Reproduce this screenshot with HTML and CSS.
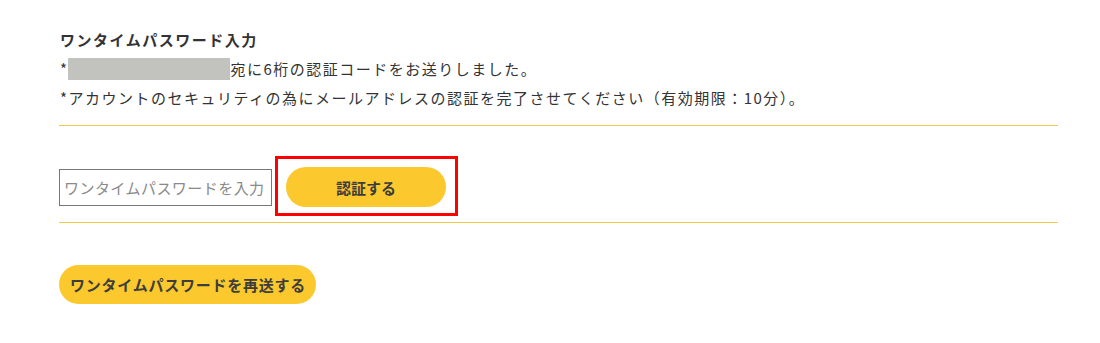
FILE: index.html
```html
<!doctype html>
<html lang="ja">
<head>
    <meta charset="UTF-8">
    <title>ワンタイムパスワード入力</title>
    <link rel="stylesheet" href="styles.css">
</head>
    <body>
        <section class="otpSection">
            <div class="otpInfo">
                <h2 class="otpTitle">ワンタイムパスワード入力</h2>
                <p class="otpText">*<span class="otpMask"></span>宛に6桁の認証コードをお送りしました。</p>
                <p class="otpText">*アカウントのセキュリティの為にメールアドレスの認証を完了させてください（有効期限：10分）。</p>
            </div>
            <div class="otpForm">
                <input class="otpInput" type="text" placeholder="ワンタイムパスワードを入力">
                <div class="otpHighlight">
                    <button class="otpButton otpSubmit">認証する</button>
                </div>
            </div>
            <div class="otpResend">
                <button class="otpButton otpResendBtn">ワンタイムパスワードを再送する</button>
            </div>
        </section>
    </body>
</html>
```

FILE: styles.css
```css
body {
    margin: 0;
    background-color: #ffffff;
    font-family: "Noto Sans CJK JP", "Noto Sans", sans-serif;
    color: #333333;
}

.otpSection {
    width: 999px;
    margin-left: 59px;
    padding-top: 28px;
}

.otpInfo {
    padding-left: 1px;
    padding-bottom: 13px;
    border-bottom: 1px solid #f3c94c;
}

.otpTitle {
    font-size: 15px;
    font-weight: bold;
    letter-spacing: 0.1em;
    line-height: 24px;
    margin: 0 0 2px 0;
}

.otpText {
    font-size: 15px;
    letter-spacing: 0.1em;
    line-height: 29px;
    margin: 0;
    display: flex;
    align-items: center;
}

.otpMask {
    display: inline-block;
    width: 162px;
    height: 22px;
    margin: 0 1px 0 -1px;
    background-color: #c2c2be;
}

.otpForm {
    display: flex;
    align-items: center;
    padding: 30px 0 6px 0;
    border-bottom: 1px solid #f3c94c;
}

.otpInput {
    box-sizing: border-box;
    width: 213px;
    height: 37px;
    margin-top: 3px;
    padding: 0 0 0 4px;
    border: 1px solid #777777;
    border-radius: 0;
    font-family: "Noto Sans CJK JP", sans-serif;
    font-size: 15px;
    letter-spacing: 0.03em;
}

.otpInput::placeholder {
    color: #8a8a8a;
}

.otpHighlight {
    margin-left: 3px;
    padding: 8px 9px 6px 8px;
    border: 3px solid #ff0000;
}

.otpButton {
    border: none;
    border-radius: 999px;
    background-color: #fbc82d;
    color: #3d3d3d;
    font-family: "Noto Sans CJK JP", sans-serif;
    font-weight: bold;
    cursor: pointer;
}

.otpSubmit {
    display: block;
    width: 160px;
    height: 40px;
    font-size: 15px;
}

.otpResend {
    padding-top: 42px;
}

.otpResendBtn {
    height: 39px;
    padding: 0 10px 0 11px;
    font-size: 15px;
    letter-spacing: 0.05em;
}
```
